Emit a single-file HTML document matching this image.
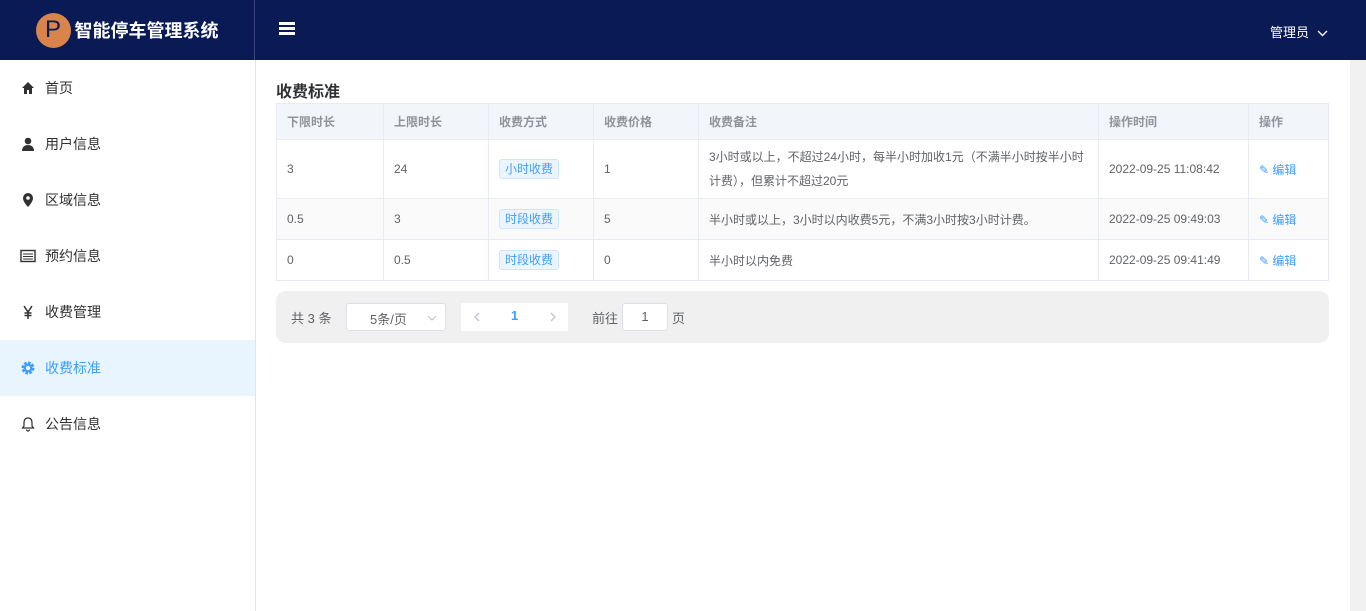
<!DOCTYPE html><html><head><meta charset="utf-8"><style>
*{box-sizing:border-box;margin:0;padding:0}
body{width:1366px;height:611px;overflow:hidden;font-family:"Liberation Sans","Noto Sans CJK SC",sans-serif;background:#fff;position:relative;font-size:13px;color:#606266}
.top{position:absolute;left:0;top:0;width:1366px;height:60px;background:#0a1a55}
.logo{position:absolute;left:0;top:0;width:255px;height:60px;border-right:1px solid #fff3;display:flex;align-items:center;justify-content:center;color:#fff;font-weight:bold;font-size:18px}
.p{width:35px;height:35px;border-radius:50%;background:#d9844a;color:#0a1a55;font-size:24px;display:flex;align-items:center;justify-content:center;margin-right:4px;font-weight:normal}
.side{position:absolute;left:0;top:60px;width:256px;height:551px;border-right:1px solid #e6e6e6}
.it{height:56px;display:flex;align-items:center;padding-left:20px;font-size:14px;color:#303133}
.it svg{width:16px;height:16px;margin-right:9px}
.act{background:#e8f4fe;color:#409eff}
.sb{position:absolute;left:1350px;top:60px;width:16px;height:551px;background:#f1f1f1}
h2{position:absolute;left:276px;top:78px;font-size:16px;color:#303133;font-weight:bold}
table{position:absolute;left:276px;top:103px;border-collapse:collapse;width:1053px;font-size:12px}
td,th{border:1px solid #e8ecf2;text-align:left;padding:0 10px;font-weight:normal}
th{background:#f2f5f9;height:36px;color:#909399;font-weight:bold}
.tag{display:inline-block;border:1px solid #cce6fb;background:#ecf5ff;color:#409eff;border-radius:3px;padding:0 5px;line-height:18px}
.g{background:#fafafa}
.pg{position:absolute;left:276px;top:291px;width:1053px;height:52px;background:#f0f0f0;border-radius:10px;font-size:13px}
.blue{color:#409eff}
</style></head><body>
<div class="top"><div class="logo"><div class="p">P</div>智能停车管理系统</div>
<div style="position:absolute;left:279px;top:22px;width:16px;height:13px;border-top:3px solid #fff;border-bottom:3px solid #fff"><div style="margin-top:2px;height:3px;background:#fff"></div></div>
<div style="position:absolute;left:1270px;top:22px;color:#fff;font-size:13px">管理员 <svg width="11" height="8" viewBox="0 0 11 8" style="margin-left:4px"><path d="M1 2l4.5 4.5L10 2" stroke="#fff" fill="none" stroke-width="1.4"/></svg></div></div>
<div class="side">
<div class="it"><svg viewBox="0 0 16 16"><path d="M2 8L8 2l6 6h-2v6H9v-4H7v4H4V8z" fill="#303133"/></svg>首页</div>
<div class="it"><svg viewBox="0 0 16 16"><circle cx="8" cy="5" r="3.3" fill="#303133"/><path d="M2 15c0-4 2.5-6 6-6s6 2 6 6z" fill="#303133"/></svg>用户信息</div>
<div class="it"><svg viewBox="0 0 16 16"><path d="M8 1a5 5 0 0 1 5 5c0 4-5 9-5 9S3 10 3 6a5 5 0 0 1 5-5z" fill="#303133"/><circle cx="8" cy="6" r="1.8" fill="#fff"/></svg>区域信息</div>
<div class="it"><svg viewBox="0 0 16 16"><rect x="1" y="2.5" width="14" height="11" fill="none" stroke="#303133" stroke-width="1.4"/><path d="M3 6h10M3 8.5h10M3 11h10" stroke="#303133"/></svg>预约信息</div>
<div class="it"><svg viewBox="0 0 16 16"><path d="M4 2l4 6 4-6M8 8v7M4.5 9h7M4.5 11.5h7" stroke="#303133" stroke-width="1.5" fill="none"/></svg>收费管理</div>
<div class="it act"><svg viewBox="0 0 16 16"><circle cx="8" cy="8" r="5" fill="none" stroke="#409eff" stroke-width="3" stroke-dasharray="2.6 1.3"/><circle cx="8" cy="8" r="4.5" fill="#409eff"/><circle cx="8" cy="8" r="2" fill="#fff"/></svg>收费标准</div>
<div class="it"><svg viewBox="0 0 16 16"><path d="M8 2c-3 0-4 2-4 5v3l-1.5 2h11L12 10V7c0-3-1-5-4-5zM6.5 13.5a1.5 1.5 0 0 0 3 0" fill="none" stroke="#303133" stroke-width="1.2"/></svg>公告信息</div>
</div>
<div class="sb"></div>
<h2>收费标准</h2>
<table>
<tr><th style="width:107px">下限时长</th><th style="width:105px">上限时长</th><th style="width:105px">收费方式</th><th style="width:105px">收费价格</th><th style="width:400px">收费备注</th><th style="width:150px">操作时间</th><th>操作</th></tr>
<tr style="height:59px"><td>3</td><td>24</td><td><span class="tag">小时收费</span></td><td>1</td><td style="line-height:24px">3小时或以上，不超过24小时，每半小时加收1元（不满半小时按半小时计费），但累计不超过20元</td><td>2022-09-25 11:08:42</td><td class="blue">✎ 编辑</td></tr>
<tr style="height:41px" class="g"><td>0.5</td><td>3</td><td><span class="tag">时段收费</span></td><td>5</td><td>半小时或以上，3小时以内收费5元，不满3小时按3小时计费。</td><td>2022-09-25 09:49:03</td><td class="blue">✎ 编辑</td></tr>
<tr style="height:41px"><td>0</td><td>0.5</td><td><span class="tag">时段收费</span></td><td>0</td><td>半小时以内免费</td><td>2022-09-25 09:41:49</td><td class="blue">✎ 编辑</td></tr>
</table>
<div class="pg">
<span style="position:absolute;left:15px;top:17px">共 3 条</span>
<div style="position:absolute;left:70px;top:12px;width:100px;height:28px;background:#fff;border:1px solid #dcdfe6;border-radius:3px;padding:5px 0 0 23px">5条/页<svg width="10" height="6" viewBox="0 0 10 6" style="position:absolute;right:8px;top:11px"><path d="M1 1l4 4 4-4" stroke="#c0c4cc" fill="none"/></svg></div>
<div style="position:absolute;left:185px;top:12px;width:107px;height:28px;background:#fff"><svg width="6" height="10" viewBox="0 0 6 10" style="position:absolute;left:13px;top:9px"><path d="M5 1L1 5l4 4" stroke="#c0c4cc" fill="none" stroke-width="1.3"/></svg><span style="position:absolute;left:50px;top:5px;color:#409eff;font-weight:bold">1</span><svg width="6" height="10" viewBox="0 0 6 10" style="position:absolute;left:89px;top:9px"><path d="M1 1l4 4-4 4" stroke="#c0c4cc" fill="none" stroke-width="1.3"/></svg></div>
<span style="position:absolute;left:316px;top:17px">前往</span>
<div style="position:absolute;left:346px;top:12px;width:46px;height:28px;background:#fff;border:1px solid #dcdfe6;border-radius:3px;text-align:center;padding-top:5px">1</div>
<span style="position:absolute;left:396px;top:17px">页</span>
</div>
</body></html>
